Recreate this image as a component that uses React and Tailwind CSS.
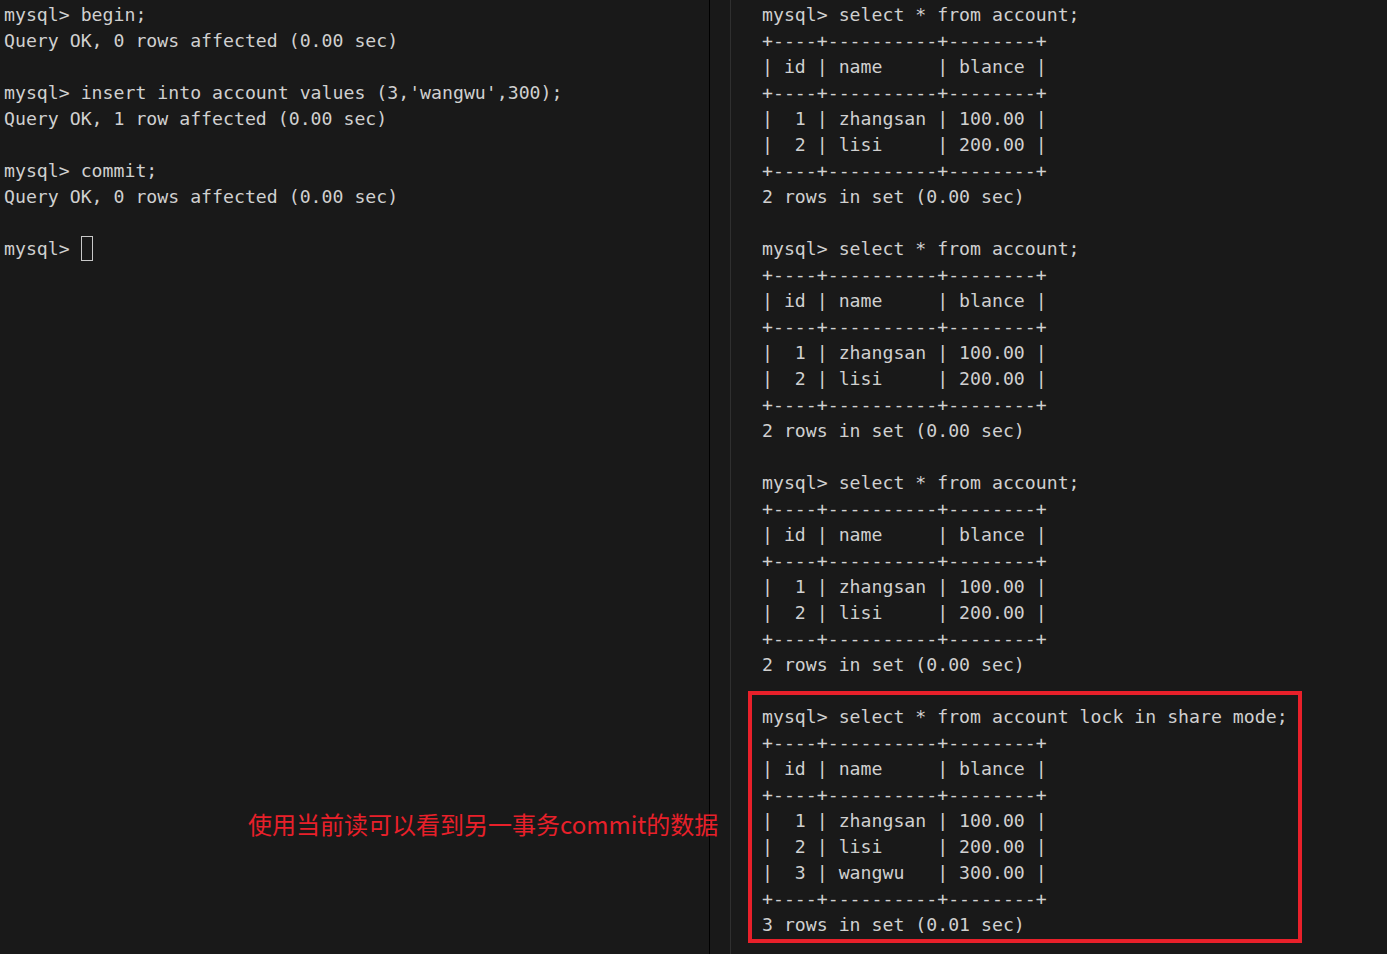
import React from "react";

const mono = { fontFamily: '"DejaVu Sans Mono", "Liberation Mono", monospace' };

function Lines({ lines }) {
  return (
    <>
      {lines.map((l, i) => (
        <div key={i} className="h-[26px] leading-[26px] whitespace-pre">
          {l === "" ? "\u00a0" : l}
        </div>
      ))}
    </>
  );
}

const sep = "+----+----------+--------+";
const header = "| id | name     | blance |";
const block2 = [
  "mysql> select * from account;",
  sep,
  header,
  sep,
  "|  1 | zhangsan | 100.00 |",
  "|  2 | lisi     | 200.00 |",
  sep,
  "2 rows in set (0.00 sec)",
  "",
];

export default function App() {
  return (
    <div
      className="w-[1387px] h-[954px] overflow-hidden bg-[#191919] text-[#d0d0d0] text-[18.2px] flex"
      style={mono}
    >
      <div className="relative w-[709px] shrink-0 pt-[2px] pl-1">
        <Lines
          lines={[
            "mysql> begin;",
            "Query OK, 0 rows affected (0.00 sec)",
            "",
            "mysql> insert into account values (3,'wangwu',300);",
            "Query OK, 1 row affected (0.00 sec)",
            "",
            "mysql> commit;",
            "Query OK, 0 rows affected (0.00 sec)",
            "",
          ]}
        />
        <div className="h-[26px] flex items-center whitespace-pre">
          <span>mysql&gt; </span>
          <span className="inline-block w-[12px] h-[25px] -mt-[2px] border-[1.5px] border-[#c8c8c8]" />
        </div>
        <div
          className="absolute left-[248px] top-[810px] text-[24px] leading-[28px] text-[#e8202a] whitespace-nowrap"
          style={{ fontFamily: '"Noto Sans CJK SC", "Noto Sans", sans-serif' }}
        >
          使用当前读可以看到另一事务commit的数据
        </div>
      </div>
      <div className="w-px shrink-0 bg-black" />
      <div className="w-5 shrink-0" />
      <div className="w-px shrink-0 bg-[#2f2f2f]" />
      <div className="flex-1 pl-[31px] pt-[2px]">
        <Lines lines={block2} />
        <Lines lines={block2} />
        <Lines lines={block2} />
        <div className="relative">
          <Lines
            lines={[
              "mysql> select * from account lock in share mode;",
              sep,
              header,
              sep,
              "|  1 | zhangsan | 100.00 |",
              "|  2 | lisi     | 200.00 |",
              "|  3 | wangwu   | 300.00 |",
              sep,
              "3 rows in set (0.01 sec)",
            ]}
          />
          <div className="absolute left-[-14px] top-[-13px] w-[554px] h-[252px] border-4 border-[#e8202a]" />
        </div>
      </div>
    </div>
  );
}
